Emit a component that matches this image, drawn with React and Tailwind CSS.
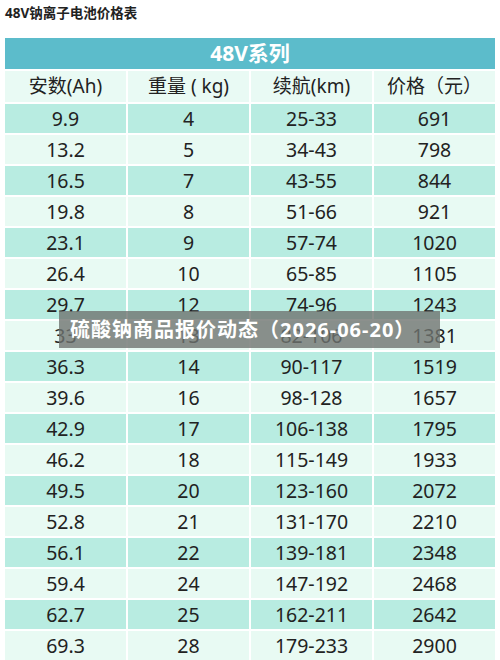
const rows = [
  ['9.9', '4', '25-33', '691'],
  ['13.2', '5', '34-43', '798'],
  ['16.5', '7', '43-55', '844'],
  ['19.8', '8', '51-66', '921'],
  ['23.1', '9', '57-74', '1020'],
  ['26.4', '10', '65-85', '1105'],
  ['29.7', '12', '74-96', '1243'],
  ['33', '13', '82-106', '1381'],
  ['36.3', '14', '90-117', '1519'],
  ['39.6', '16', '98-128', '1657'],
  ['42.9', '17', '106-138', '1795'],
  ['46.2', '18', '115-149', '1933'],
  ['49.5', '20', '123-160', '2072'],
  ['52.8', '21', '131-170', '2210'],
  ['56.1', '22', '139-181', '2348'],
  ['59.4', '24', '147-192', '2468'],
  ['62.7', '25', '162-211', '2642'],
  ['69.3', '28', '179-233', '2900'],
];

const heads = ['安数(Ah)', '重量 ( kg)', '续航(km)', '价格（元）'];

export default function App() {
  return (
    <div className="relative w-[500px] h-[660px] overflow-hidden bg-white font-['Noto_Sans','Noto_Sans_CJK_SC',sans-serif]">
      <div className="h-[38px] pl-[5px] pt-[3px] text-[13.5px] font-bold text-[#222] leading-[20px]">
        48V钠离子电池价格表
      </div>
      <div className="mx-[5px] flex flex-col gap-[2px]">
        <div className="h-[31px] bg-[#5cbccb] flex items-center justify-center text-white text-[21px] font-bold">
          48V系列
        </div>
        <div className="grid grid-cols-4 gap-[2px]">
          {heads.map((h) => (
            <div key={h} className="h-[31px] bg-[#e9faf4] flex items-center justify-center text-[19px] text-[#222]">
              {h}
            </div>
          ))}
        </div>
        {rows.map((r, i) => (
          <div key={i} className="grid grid-cols-4 gap-[2px]">
            {r.map((c, j) => (
              <div
                key={j}
                className={`h-[29px] flex items-center justify-center text-[19.5px] text-[#222] ${i % 2 === 0 ? 'bg-[#b8ece1]' : 'bg-[#e8faf3]'}`}
              >
                {c}
              </div>
            ))}
          </div>
        ))}
      </div>
      <div className="absolute left-[59px] top-[311px] w-[381px] h-[37px] bg-[#6f7470]/80 flex items-center pl-[11px] text-white text-[20px] font-bold tracking-[1px]">
        硫酸钠商品报价动态（2026-06-20）
      </div>
    </div>
  );
}
